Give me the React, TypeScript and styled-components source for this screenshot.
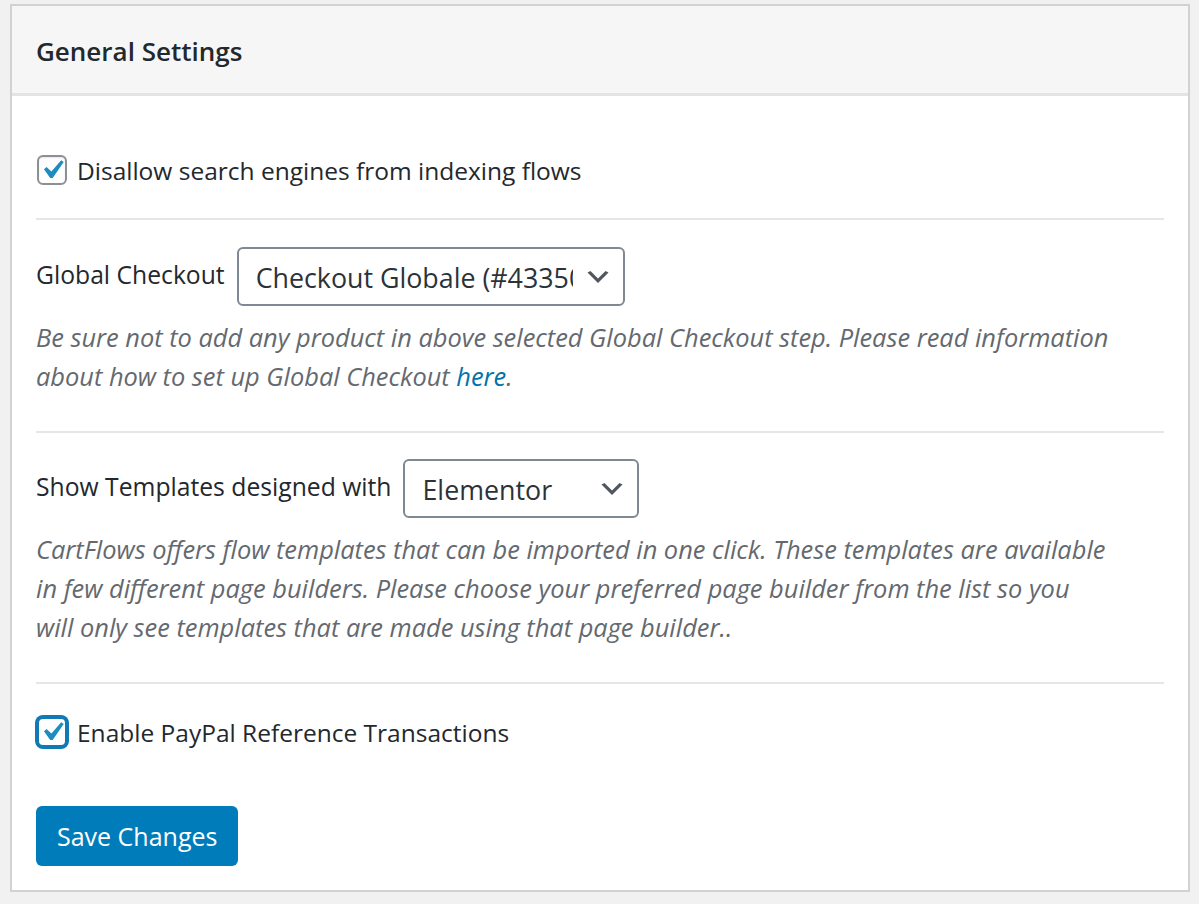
import React from "react";
import styled, { createGlobalStyle } from "styled-components";

const GlobalStyle = createGlobalStyle`
  html, body {
    margin: 0;
    padding: 0;
    background: #f1f1f1;
  }
  body {
    font-family: "Open Sans", "Noto Sans", "Liberation Sans", sans-serif;
    color: #23282d;
  }
  * { box-sizing: border-box; }
`;

const Page = styled.div`
  padding: 4px 9px 12px 10px;
`;

const Panel = styled.div`
  background: #fff;
  border: 2px solid #d2d2d2;
`;

const Header = styled.div`
  height: 90px;
  background: #f6f6f6;
  border-bottom: 3px solid #e4e4e4;
  display: flex;
  align-items: center;
  padding: 3px 24px 0 24px;
`;

const Title = styled.h2`
  margin: 0;
  font-size: 26px;
  font-weight: 600;
  color: #23282d;
`;

const Body = styled.div`
  padding: 0 24px;
`;

const Section = styled.div<{ $top: number; $bottom: number; $last?: boolean }>`
  padding-top: ${(p) => p.$top}px;
  padding-bottom: ${(p) => p.$bottom}px;
  border-bottom: ${(p) => (p.$last ? "none" : "2px solid #e6e6e6")};
`;

const Row = styled.label`
  display: flex;
  align-items: center;
  min-height: 34px;
  gap: 10px;
  font-size: 24.5px;
  color: #23282d;
  cursor: pointer;
`;

const RowText = styled.span`
  padding-top: 1px;
`;

const Box = styled.span<{ $focused?: boolean }>`
  width: 30px;
  height: 30px;
  flex: none;
  display: flex;
  align-items: center;
  justify-content: center;
  overflow: visible;
  background: #fff;
  border-radius: 6px;
  border: 2px solid ${(p) => (p.$focused ? "#0f7ab5" : "#8c8f94")};
  box-shadow: ${(p) => (p.$focused ? "0 0 0 2px #0f7ab5" : "inset 0 1px 2px rgba(0,0,0,0.1)")};
  margin-left: 1px;
`;

const CheckIcon = styled.svg`
  flex: none;
  width: 38px;
  height: 38px;
  margin: -4px;
`;

const FieldRow = styled.div`
  display: flex;
  align-items: center;
  gap: 12px;
`;

const FieldLabel = styled.span`
  font-size: 24.7px;
  color: #23282d;
  margin-top: -5px;
`;

const Select = styled.div<{ $width: number }>`
  width: ${(p) => p.$width}px;
  height: 59px;
  border: 2px solid #7e8993;
  border-radius: 6px;
  background: #fff;
  display: flex;
  align-items: center;
  padding: 0 10px 0 17px;
  gap: 10px;
`;

const SelectText = styled.span`
  flex: 1;
  overflow: hidden;
  white-space: nowrap;
  font-size: 26.8px;
  color: #2c3338;
  padding-top: 2px;
`;

const Description = styled.p`
  margin: 12px 0 0 0;
  font-size: 25.4px;
  line-height: 39px;
  font-style: italic;
  color: #646970;
`;

const Line = styled.span`
  display: block;
  white-space: nowrap;
`;

const Link = styled.a`
  color: #0073aa;
  text-decoration: none;
`;

const Button = styled.button`
  margin-top: 57px;
  height: 60px;
  padding: 0 21px;
  background: #007cba;
  border: none;
  border-radius: 6px;
  color: #fff;
  font-family: inherit;
  font-size: 25px;
  cursor: pointer;
`;

const Check = () => (
  <CheckIcon viewBox="0 0 20 20">
    <path d="M14.83 4.89l1.34.94-5.81 8.38H9.02L5.78 9.67l1.34-1.25 2.57 2.4z" fill="#1e8cbe" />
  </CheckIcon>
);

const Chevron = () => (
  <svg width="30" height="30" viewBox="0 0 20 20" style={{ flex: "none" }}>
    <path d="M5 6l5 5 5-5 2 1-7 7-7-7 2-1z" fill="#50575e" />
  </svg>
);

export default function App() {
  return (
    <>
      <GlobalStyle />
      <Page>
        <Panel>
          <Header>
            <Title>General Settings</Title>
          </Header>
          <Body>
            <Section $top={57} $bottom={31}>
              <Row>
                <Box>
                  <Check />
                </Box>
                <RowText>Disallow search engines from indexing flows</RowText>
              </Row>
            </Section>
            <Section $top={27} $bottom={35}>
              <FieldRow>
                <FieldLabel>Global Checkout</FieldLabel>
                <Select $width={388}>
                  <SelectText>Checkout Globale (#43350)</SelectText>
                  <Chevron />
                </Select>
              </FieldRow>
              <Description>
                <Line>
                  Be sure not to add any product in above selected Global Checkout step. Please read information
                </Line>
                <Line>
                  about how to set up Global Checkout <Link href="#">here</Link>.
                </Line>
              </Description>
            </Section>
            <Section $top={26} $bottom={35}>
              <FieldRow>
                <FieldLabel>Show Templates designed with</FieldLabel>
                <Select $width={236}>
                  <SelectText>Elementor</SelectText>
                  <Chevron />
                </Select>
              </FieldRow>
              <Description>
                <Line>
                  CartFlows offers flow templates that can be imported in one click. These templates are available
                </Line>
                <Line>
                  in few different page builders. Please choose your preferred page builder from the list so you
                </Line>
                <Line>will only see templates that are made using that page builder..</Line>
              </Description>
            </Section>
            <Section $top={31} $bottom={24} $last>
              <Row>
                <Box $focused>
                  <Check />
                </Box>
                <RowText>Enable PayPal Reference Transactions</RowText>
              </Row>
              <Button type="button">Save Changes</Button>
            </Section>
          </Body>
        </Panel>
      </Page>
    </>
  );
}
